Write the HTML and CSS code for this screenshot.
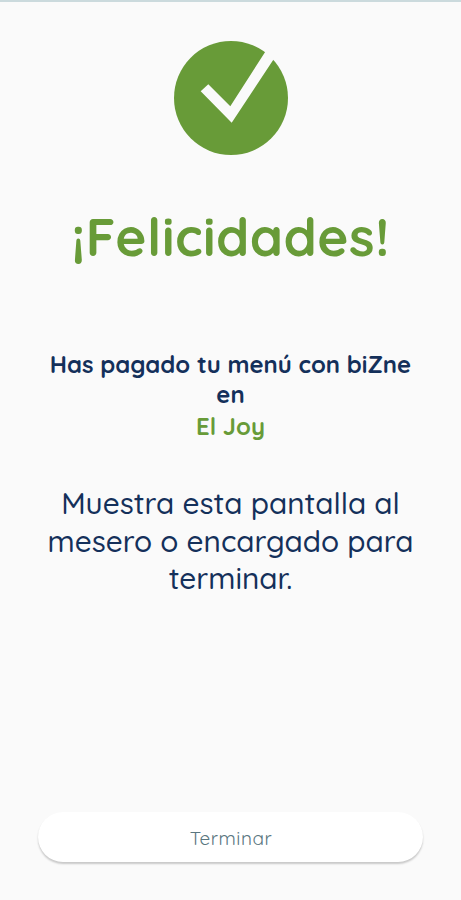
FILE: index.html
```html
<!DOCTYPE html>
<html lang="es">

<head>
	<meta charset="utf-8">
	<meta name="viewport" content="width=device-width, initial-scale=1">
	<title>biZne - Pago realizado</title>
	<link rel="stylesheet" href="styles.css">
</head>

<body>
	<main class="screen">
		<svg class="check" viewBox="0 0 114 114" aria-hidden="true">
			<circle class="check-circle" cx="57" cy="57" r="57" />
			<path class="check-mark" d="M26.7 50.3 34.3 43.3 56.3 65.2 93.4 7.5 98 5 104 12 99.5 18.5 57.7 81.7Z" />
		</svg>
		<h1 class="title">¡Felicidades!</h1>
		<p class="paid">Has pagado tu menú con biZne<br>en</p>
		<p class="place">El Joy</p>
		<p class="message">Muestra esta pantalla al<br>mesero o encargado para<br>terminar.</p>
		<button class="finish-btn" type="button">Terminar</button>
	</main>
</body>

</html>
```
FILE: styles.css
```css
* {
	box-sizing: border-box;
}

body {
	margin: 0;
	background-color: #fafafa;
	font-family: Quicksand, Lato, sans-serif;
	color: #14305a;
}

.screen {
	display: flex;
	flex-direction: column;
	align-items: center;
	height: 900px;
	padding: 39px 38px 38px;
	border-top: 2px solid #cbdadd;
	text-align: center;
}

.check {
	flex: none;
	width: 114px;
	height: 114px;
}

.check-circle {
	fill: #689b38;
}

.check-mark {
	fill: #fafafa;
}

.title {
	margin: 49px 0 0;
	font-size: 53px;
	line-height: 64px;
	font-weight: 700;
	letter-spacing: 0.5px;
	white-space: nowrap;
	color: #689b38;
}

.paid {
	margin: 81px 0 0;
	font-size: 23.9px;
	line-height: 30px;
	font-weight: 700;
	white-space: nowrap;
}

.place {
	margin: 1px 0 0;
	font-size: 23.9px;
	line-height: 32px;
	font-weight: 700;
	color: #689b38;
}

.message {
	margin: 42px 0 0;
	font-size: 29.7px;
	line-height: 37.6px;
	font-weight: 500;
	white-space: nowrap;
}

.finish-btn {
	width: 385px;
	height: 50px;
	margin-top: auto;
	padding: 2px 0 0 1px;
	border: none;
	border-radius: 25px;
	background-color: #fff;
	box-shadow: 0 2px 2px rgba(0, 0, 0, 0.2);
	font-family: inherit;
	font-size: 19px;
	font-weight: 400;
	letter-spacing: 0.5px;
	color: #5a7680;
	cursor: pointer;
}
```
